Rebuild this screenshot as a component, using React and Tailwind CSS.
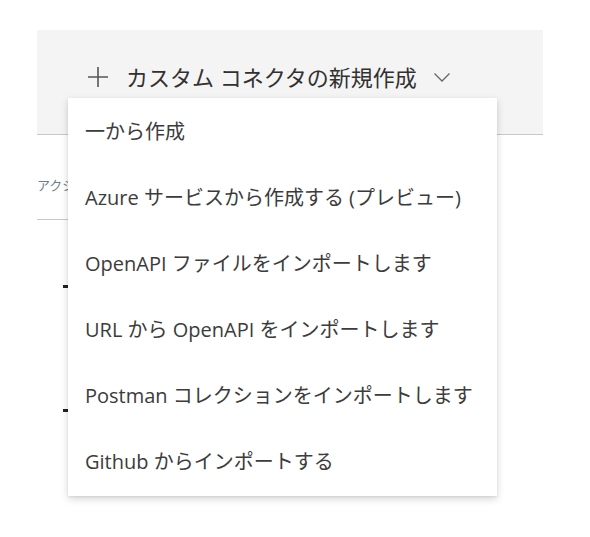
import React from 'react';

const menuItems = [
  '一から作成',
  'Azure サービスから作成する (プレビュー)',
  'OpenAPI ファイルをインポートします',
  'URL から OpenAPI をインポートします',
  'Postman コレクションをインポートします',
  'Github からインポートする',
];

const font = { fontFamily: '"Open Sans", "Noto Sans CJK JP", sans-serif' };

export default function App() {
  return (
    <div className="min-h-screen bg-white" style={font}>
      <div className="relative ml-[37px] w-[506px] pt-[30px]">
        {/* command bar */}
        <div className="h-[105px] bg-[#f4f4f4] border-b border-[#c8c8c8] pl-[50px] pt-[36px]">
          <button className="flex items-center text-[22px] leading-none text-[#323130]">
            <svg width="22" height="22" viewBox="0 0 22 22" className="mr-[17px]">
              <path d="M11 1v20M1 11h20" stroke="#555" strokeWidth="1.6" />
            </svg>
            <span>カスタム コネクタの新規作成</span>
            <svg width="18" height="12" viewBox="0 0 18 12" className="ml-[16px]">
              <path d="M1.5 2.5l7.5 7.5 7.5-7.5" fill="none" stroke="#666" strokeWidth="1.3" />
            </svg>
          </button>
        </div>

        {/* tab row behind the menu */}
        <div className="pt-[44px]">
          <div className="w-[80px] border-b border-[#c8c8c8] pb-[27px]">
            <div className="w-[31px] overflow-hidden whitespace-nowrap text-[13px] leading-none text-[#6b7c8e]">
              アクション
            </div>
          </div>
          <div className="pl-[26px]">
            <div className="mt-[65px] h-[3px] w-[5px] bg-[#222]" />
            <div className="mt-[121px] h-[3px] w-[5px] bg-[#222]" />
          </div>
        </div>

        {/* dropdown menu */}
        <div className="absolute left-[31px] top-[98px] w-[429px] bg-white py-[1px] shadow-[0_3px_8px_rgba(0,0,0,0.16),0_1px_2px_rgba(0,0,0,0.08)]">
          {menuItems.map((label) => (
            <div
              key={label}
              className="flex h-[66px] items-center px-[17px] text-[20px] leading-none text-[#3c3c3c] whitespace-nowrap"
            >
              {label}
            </div>
          ))}
        </div>
      </div>
    </div>
  );
}
